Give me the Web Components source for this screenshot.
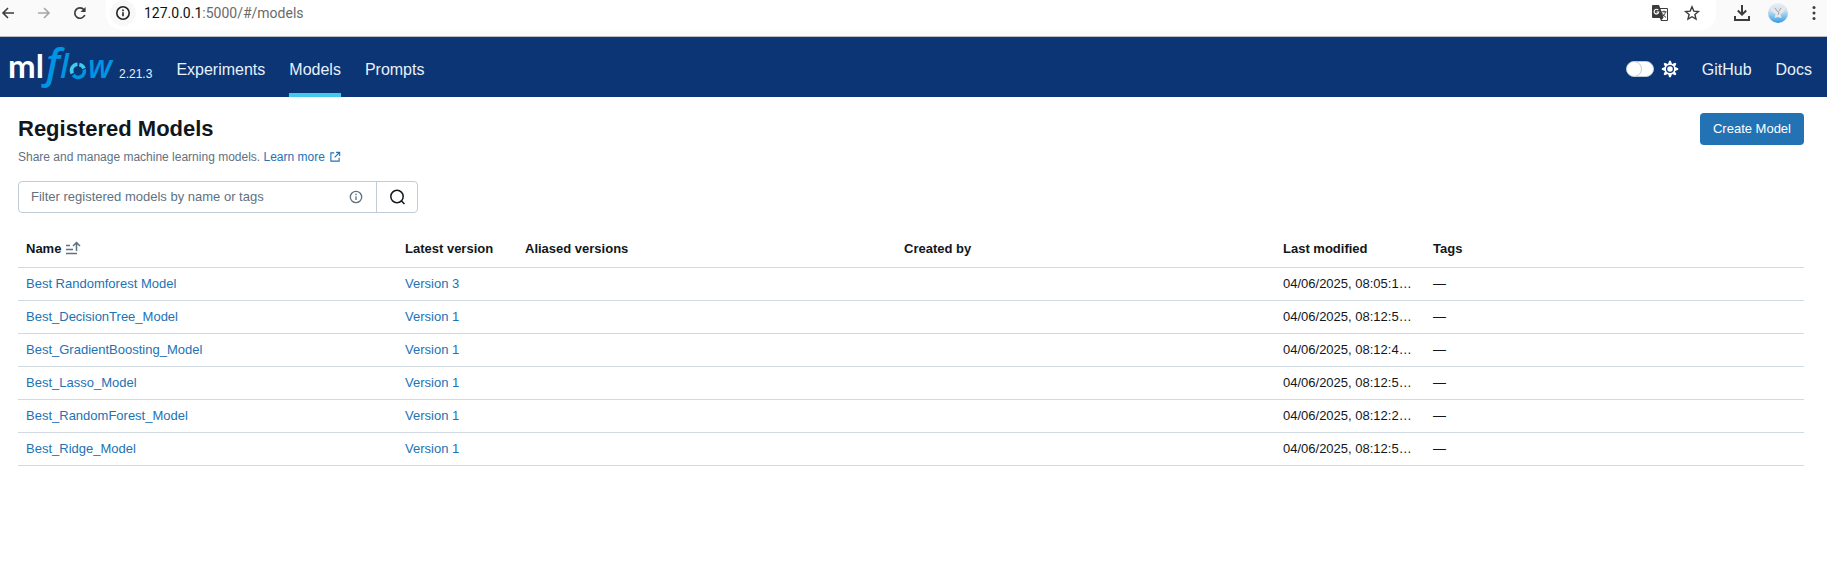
<!DOCTYPE html>
<html lang="en">
<head>
<meta charset="utf-8">
<meta name="viewport" content="width=device-width, initial-scale=1">
<title>MLflow</title>
<style>
  body { margin: 0; background: #fff; color: #11171c; font: 13px/20px "Liberation Sans", Arial, sans-serif; }
</style>
</head>
<body>
<browser-bar><span slot="host">127.0.0.1</span><span slot="path">:5000/#/models</span></browser-bar>
<app-header version="2.21.3">
  <nav-link>Experiments</nav-link>
  <nav-link active>Models</nav-link>
  <nav-link>Prompts</nav-link>
  <nav-link slot="end">GitHub</nav-link>
  <nav-link slot="end">Docs</nav-link>
</app-header>
<models-page></models-page>

<script>
const define = (name, html, setup) => {
  const template = document.createElement('template');
  template.innerHTML = html;
  customElements.define(name, class extends HTMLElement {
    constructor() {
      super();
      this.attachShadow({ mode: 'open' }).append(template.content.cloneNode(true));
    }
    connectedCallback() { if (setup) setup(this, this.shadowRoot); }
  });
};

const stroke = (w, d) => `<g fill="none" stroke="currentColor" stroke-width="${w}">${d}</g>`;
const teeth = Array.from({ length: 8 }, (_, i) => `<path d="M5.800 3.500 L7.200 -.2h1.600L10.200 3.500Z" transform="rotate(${i * 45} 8 8)"/>`).join('');
const ICONS = {
  back: stroke(1.6, '<path d="M14 8H3M8 3L3 8l5 5"/>'),
  forward: stroke(1.6, '<path d="M2 8h11M8 3l5 5-5 5"/>'),
  reload: stroke(1.7, '<path d="M12.8 10A5.2 5.2 0 1 1 12 4.7"/>') + '<path d="M13.6 2v5.1H8.500Z"/>',
  site: stroke(1.6, '<circle cx="8" cy="8" r="6.200"/>') + '<path d="M7.200 7.200h1.600v4H7.200zM7.200 4.600h1.600v1.600H7.200z"/>',
  translate: '<path d="M1 0h6l1.200 3H15a1 1 0 0 1 1 1v11a1 1 0 0 1-1 1H9l-1.200-3H1a1 1 0 0 1-1-1V1a1 1 0 0 1 1-1z"/><path d="M8.600 4l3 8.500L9.600 15H15V4z" fill="#fff"/><g fill="none" stroke="#fff" stroke-width="1.200"><path d="M6.300 5.200A2.300 2.300 0 1 0 6.700 7H4.500"/></g><g fill="none" stroke="currentColor" stroke-width="1"><path d="M9.500 6.800h5M12 5.500v1.300M13.500 6.800c-.5 2.500-2 4-3.500 5M10.500 8.500c1 2 2 3 3.500 3.800"/></g>',
  star: stroke(1.4, '<path d="M8 1.800l1.800 4.300 4.600.4-3.500 3 1.100 4.600L8 11.700l-4 2.400 1.100-4.600-3.500-3 4.600-.4z"/>'),
  download: stroke(2, '<path d="M8 0v9.500M3.800 5.500L8 9.700l4.200-4.200M1 11v4h14v-4"/>'),
  more: '<circle cx="8" cy="2.500" r="1.500"/><circle cx="8" cy="8" r="1.500"/><circle cx="8" cy="13.500" r="1.500"/>',
  gear: teeth + '<circle cx="8" cy="8" r="5.500"/><circle cx="8" cy="8" r="3.400" fill="none" stroke="#0b3574" stroke-width="1.300"/>',
  external: stroke(1.500, '<path d="M7 2.500H2.500v11h11V9M9.500 1.800h4.700v4.700M14 2L7.500 8.500"/>'),
  info: stroke(1.500, '<circle cx="8" cy="8" r="6.500"/>') + '<path d="M7.250 7h1.500v4.500h-1.500z"/><circle cx="8" cy="5" r=".9"/>',
  search: stroke(1.500, '<circle cx="8" cy="7.500" r="6.200"/><path d="M12.200 11.700L15.500 15"/>'),
  sort: stroke(1.500, '<path d="M1 4.500h4M1 8.500h7M1 12.500h11M11.500 10V1.500M8 5l3.500-3.500L15 5"/>')
};
define('app-icon', `<style>
  :host { display: inline-block; flex: none; width: 16px; height: 16px; }
  svg { display: block; width: 100%; height: 100%; overflow: visible; fill: currentColor; }
</style><svg viewBox="0 0 16 16" aria-hidden="true"></svg>`, (el, root) => {
  root.querySelector('svg').innerHTML = ICONS[el.getAttribute('name')];
});

define('profile-avatar', `<style>
  :host { display: block; width: 20px; height: 20px; }
  svg { display: block; }
</style><svg width="20" height="20" viewBox="0 0 20 20" role="img" aria-label="Profile">
  <defs><linearGradient id="sky" x2="0" y2="1"><stop stop-color="#eef0f2"/><stop offset=".4" stop-color="#c5dff2"/><stop offset="1" stop-color="#2f9be8"/></linearGradient></defs>
  <circle cx="10" cy="10" r="10" fill="url(#sky)"/>
  <path d="M2 4c3 0 5 1 6.500 3L10 6l1.500 1C13 5 15 4 18 4c-1 4-3 6-5.500 7l1 4-3.500-1-3.500 1 1-4C5 10 3 8 2 4z" fill="#e7e7ea"/>
  <path d="M7 5l2 3M13 5l-2 3M9 8l2 1-1 3" stroke="#a8a2a8" fill="none"/>
</svg>`);

define('browser-bar', `<style>
  :host { display: flex; align-items: flex-start; height: 36px; overflow: hidden; background: #fafafa; border-bottom: 1px solid #b9bcc0; color: #3c3c3c; }
  button { display: grid; place-items: center; border: 0; padding: 0; background: none; color: inherit; width: 36px; height: 26px; }
  button:disabled { color: #a6a6a6; }
  .history { display: flex; width: 106px; }
  .history button:first-child { width: 26px; padding-right: 10px; }
  .address { flex: 1; display: flex; align-items: center; height: 30px; padding: 0 8px 4px 4px; box-sizing: border-box; background: #fff; border-radius: 0 0 16px 16px; }
  .address .site { width: 26px; border-radius: 50%; background: #f8f8f8; color: #222; }
  .address .url { flex: 1; padding-left: 8px; font: 14px/20px Roboto, "Noto Sans", sans-serif; color: #6a6a6a; }
  .url slot[name=host] { color: #111; }
  .address .tool { width: 32px; }
  .tools { display: flex; padding-left: 8px; }
  .tools button:last-child { width: 31px; padding-left: 4px; }
  .tools app-icon { color: #3c3c3c; }
</style>
<div class="history">
  <button aria-label="Back"><app-icon name="back"></app-icon></button>
  <button aria-label="Forward" disabled><app-icon name="forward"></app-icon></button>
  <button aria-label="Reload"><app-icon name="reload"></app-icon></button>
</div>
<div class="address">
  <button class="site" aria-label="Site information"><app-icon name="site"></app-icon></button>
  <span class="url"><slot name="host"></slot><slot name="path"></slot></span>
  <button class="tool" aria-label="Translate"><app-icon name="translate"></app-icon></button>
  <button class="tool" aria-label="Bookmark"><app-icon name="star"></app-icon></button>
</div>
<div class="tools">
  <button aria-label="Downloads"><app-icon name="download"></app-icon></button>
  <button aria-label="Profile"><profile-avatar></profile-avatar></button>
  <button aria-label="Menu"><app-icon name="more"></app-icon></button>
</div>`);

define('mlflow-logo', `<style>
  :host { display: block; }
  svg { display: block; overflow: visible; }
</style><svg width="106" height="42" viewBox="0 0 106 42" role="img" aria-label="mlflow">
  <text x="-2" y="32" font-family="Lato" font-weight="700" font-size="33" fill="#fff">ml</text>
  <g fill="#0194e2" font-family="Open Sans" font-style="italic" font-weight="600">
    <text x="36" y="32" font-size="41">f</text>
    <text x="50" y="32" font-size="32">l</text>
    <text x="78" y="32" font-size="32">w</text>
  </g>
  <g fill="none" stroke-width="3.600">
    <path d="M62.300 27.500A6.300 6.300 0 0 1 67.500 18.200M69.300 18.400A6.300 6.300 0 0 1 74 22.500" stroke="#43c9ed"/>
    <path d="M74.200 23.500A6.300 6.300 0 0 1 63.200 29" stroke="#0194e2"/>
  </g>
</svg>`);

define('nav-link', `<style>
  :host { display: flex; font-size: 16px; line-height: 20px; color: #e7f1fb; }
  a { display: flex; align-items: center; padding-top: 10px; border-bottom: 4px solid transparent; color: inherit; text-decoration: none; }
  :host([active]) a { border-color: #43c9ed; }
</style><a href="#"><slot></slot></a>`);

define('theme-switch', `<style>
  :host { display: flex; align-items: center; gap: 8px; padding-top: 4px; color: #fff; }
  input { appearance: none; box-sizing: border-box; margin: 0; width: 28px; height: 16px; border-radius: 8px; background: #fff; border: 1px solid #c0cdd8; overflow: hidden; }
  input::before { content: ""; display: block; box-sizing: border-box; width: 16px; height: 16px; margin: -1px; border-radius: 50%; border: 1px solid #c0cdd8; background: #fff; }
  label { display: flex; }
</style><input type="checkbox" id="theme"><label for="theme" aria-label="Dark theme"><app-icon name="gear"></app-icon></label>`);

define('app-header', `<style>
  :host { display: flex; align-items: stretch; height: 60px; padding: 0 15px 0 10px; background: #0b3574; }
  .brand { display: flex; align-items: center; gap: 3px; }
  .version { color: #e7f1fb; font-size: 12px; line-height: 16px; padding-top: 14px; }
  nav { display: flex; gap: 24px; }
  .main { flex: 1; padding-left: 24px; }
  theme-switch { padding-right: 24px; }
</style>
<div class="brand"><mlflow-logo></mlflow-logo><span class="version"></span></div>
<nav class="main" aria-label="Main"><slot></slot></nav>
<theme-switch></theme-switch>
<nav aria-label="Resources"><slot name="end"></slot></nav>`, (el, root) => {
  root.querySelector('.version').textContent = el.getAttribute('version');
});

define('model-search', `<style>
  :host { display: flex; width: 400px; max-width: 100%; height: 32px; box-sizing: border-box; border: 1px solid #c0cdd8; border-radius: 4px; background: #fff; }
  label { flex: 1; display: flex; align-items: center; padding: 0 13px 0 12px; color: #5f7281; }
  input { flex: 1; min-width: 0; border: 0; padding: 0; outline: 0; background: none; font: inherit; color: #11171c; }
  input::placeholder { color: #5f7281; opacity: 1; }
  label app-icon { width: 14px; height: 14px; }
  button { display: grid; place-items: center; width: 41px; padding: 0; border: 0; border-left: 1px solid #c0cdd8; background: none; color: #11171c; }
</style>
<label><input type="text" aria-label="Filter registered models" placeholder="Filter registered models by name or tags"><app-icon name="info"></app-icon></label>
<button aria-label="Search"><app-icon name="search"></app-icon></button>`);

define('model-table', `<style>
  :host { display: block; }
  table { width: 100%; table-layout: fixed; border-collapse: separate; border-spacing: 0; }
  th, td { box-sizing: border-box; padding: 0 8px; text-align: left; white-space: nowrap; overflow: hidden; text-overflow: ellipsis; border-bottom: 1px solid #d1d9e1; }
  th { height: 39px; padding-top: 2px; }
  td { height: 33px; }
  .version { width: 120px; }
  .modified { width: 150px; }
  a { color: #2272b4; text-decoration: none; }
  .sort { display: inline-flex; align-items: center; gap: 4px; }
  .sort app-icon { color: #5f7281; }
</style>
<table>
  <thead><tr>
    <th aria-sort="ascending"><span class="sort">Name<app-icon name="sort"></app-icon></span></th>
    <th class="version">Latest version</th><th>Aliased versions</th><th>Created by</th>
    <th class="modified">Last modified</th><th>Tags</th>
  </tr></thead>
  <tbody></tbody>
</table>`, (el, root) => {
  const models = [
    ['Best Randomforest Model', 'Version 3', '04/06/2025, 08:05:1…'],
    ['Best_DecisionTree_Model', 'Version 1', '04/06/2025, 08:12:5…'],
    ['Best_GradientBoosting_Model', 'Version 1', '04/06/2025, 08:12:4…'],
    ['Best_Lasso_Model', 'Version 1', '04/06/2025, 08:12:5…'],
    ['Best_RandomForest_Model', 'Version 1', '04/06/2025, 08:12:2…'],
    ['Best_Ridge_Model', 'Version 1', '04/06/2025, 08:12:5…']
  ];
  root.querySelector('tbody').innerHTML = models.map(([name, version, modified]) =>
    `<tr><td><a href="#">${name}</a></td><td><a href="#">${version}</a></td><td></td><td></td><td>${modified}</td><td>—</td></tr>`).join('');
});

define('models-page', `<style>
  :host { display: block; padding: 16px 23px 16px 18px; }
  header { display: flex; align-items: center; justify-content: space-between; }
  h1 { margin: 0; font-size: 22px; line-height: 32px; }
  header button { height: 32px; padding: 0 13px; border: 0; border-radius: 4px; background: #2272b4; color: #fff; font: inherit; }
  p { margin: 4px 0 16px; font-size: 12px; line-height: 16px; color: #5f7281; }
  p a { display: inline-flex; align-items: center; gap: 4px; color: #2272b4; text-decoration: none; }
  p app-icon { width: 12px; height: 12px; }
  model-table { margin-top: 16px; }
</style>
<header><h1>Registered Models</h1><button>Create Model</button></header>
<p>Share and manage machine learning models. <a href="#">Learn more <app-icon name="external"></app-icon></a></p>
<model-search></model-search>
<model-table></model-table>`);
</script>
</body>
</html>
